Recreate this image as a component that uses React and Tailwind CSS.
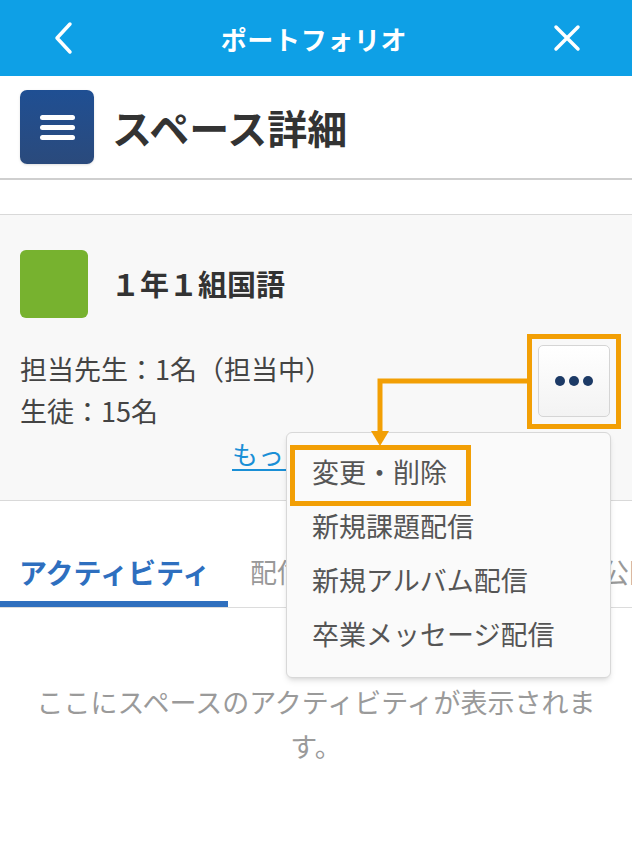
import React from "react";

const menuItems = ["変更・削除", "新規課題配信", "新規アルバム配信", "卒業メッセージ配信"];

const App = () => {
  return (
    <div
      className="relative w-[632px] h-[850px] bg-white overflow-hidden"
      style={{ fontFamily: '"Noto Sans CJK JP", "Noto Sans", sans-serif' }}
    >
      {/* top bar */}
      <div className="h-[76px] bg-[#0ea0e6] flex items-center justify-between px-[50px]">
        <svg width="26" height="34" viewBox="0 0 26 34" fill="none">
          <path d="M20 3 L7 17 L20 31" stroke="white" strokeWidth="3.5" strokeLinecap="round" strokeLinejoin="round" />
        </svg>
        <h1 className="text-white text-[26px] font-bold tracking-wide">ポートフォリオ</h1>
        <svg width="30" height="30" viewBox="0 0 30 30" fill="none">
          <path d="M4 4 L26 26 M26 4 L4 26" stroke="white" strokeWidth="3.5" strokeLinecap="round" />
        </svg>
      </div>

      {/* page title */}
      <div className="h-[104px] flex items-center gap-[18px] px-[20px] border-b-2 border-[#cfcfcf]">
        <div className="w-[74px] h-[74px] rounded-[7px] bg-gradient-to-b from-[#1f4f93] to-[#2a4a7c] flex flex-col items-center justify-center gap-[5px] shadow-sm">
          <span className="block w-[35px] h-[5px] rounded-full bg-white" />
          <span className="block w-[35px] h-[5px] rounded-full bg-white" />
          <span className="block w-[35px] h-[5px] rounded-full bg-white" />
        </div>
        <h2 className="text-[40px] font-bold text-[#333]">スペース詳細</h2>
      </div>

      <div className="h-[34px]" />

      {/* space card */}
      <div className="h-[287px] bg-[#f8f8f8] border-t border-b border-[#d9d9d9] px-[20px] pt-[35px]">
        <div className="flex items-center gap-[23px]">
          <div className="w-[68px] h-[68px] rounded-[6px] bg-[#77b22f]" />
          <p className="text-[29px] font-bold text-[#333]">１年１組国語</p>
        </div>
        <div className="mt-[30px] text-[27px] text-[#444] leading-[42px]">
          <p>担当先生：1名（担当中）</p>
          <p>生徒：15名</p>
        </div>
        <p className="mt-[2px] pl-[212px] text-[26px] text-[#1a8fd6] underline underline-offset-4 leading-[40px]">もっと見る</p>
      </div>

      {/* tabs */}
      <div className="h-[107px] flex items-end border-b border-[#dcdcdc] whitespace-nowrap">
        <div className="w-[228px] pl-[19px] pb-[9px] border-b-[6px] border-[#2f6fbe]">
          <span className="text-[28px] font-bold text-[#2e6fbf] leading-[40px]">アクティビティ</span>
        </div>
        <div className="pl-[22px] pb-[15px] flex-1 flex gap-[40px] text-[27px] text-[#999] leading-[40px]">
          <span>配信一覧</span>
          <span className="ml-auto -mr-[24px]">公開</span>
        </div>
      </div>

      <p className="mt-[72px] px-[34px] text-center text-[27px] text-[#9a9a9a] leading-[44px]">
        ここにスペースのアクティビティが表示されます。
      </p>

      {/* more button */}
      <button className="absolute left-[538px] top-[345px] w-[72px] h-[72px] rounded-[5px] border border-[#d5d5d5] bg-gradient-to-b from-white to-[#f3f3f3] flex items-center justify-center gap-[4px]">
        <span className="w-[10px] h-[10px] rounded-full bg-[#1c3a66]" />
        <span className="w-[10px] h-[10px] rounded-full bg-[#1c3a66]" />
        <span className="w-[10px] h-[10px] rounded-full bg-[#1c3a66]" />
      </button>

      {/* dropdown menu */}
      <div className="absolute left-[286px] top-[432px] w-[325px] h-[246px] bg-[#fafafa] border border-[#d8d8d8] rounded-[6px] shadow-md pt-[12px] pl-[25px]">
        {menuItems.map((item) => (
          <p key={item} className="h-[54px] flex items-center text-[27px] text-[#555]">
            {item}
          </p>
        ))}
      </div>

      {/* annotations */}
      <div className="absolute left-[527px] top-[334px] w-[94px] h-[95px] border-[5px] border-[#f29f05]" />
      <div className="absolute left-[290px] top-[445px] w-[181px] h-[61px] border-[5px] border-[#f29f05]" />
      <svg className="absolute left-0 top-0" width="632" height="850" viewBox="0 0 632 850" fill="none">
        <path d="M527 381 H380 V433" stroke="#f29f05" strokeWidth="5" />
        <path d="M371 431 L389 431 L380 446 Z" fill="#f29f05" />
      </svg>
    </div>
  );
};

export default App;
